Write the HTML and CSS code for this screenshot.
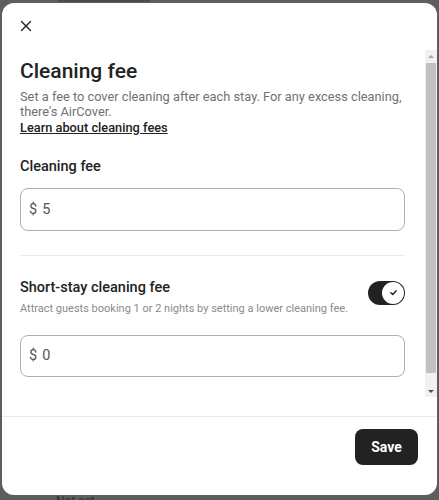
FILE: index.html
```html
<!DOCTYPE html>
<html lang="en">
<head>
<meta charset="utf-8">
<title>Cleaning fee</title>
<link rel="stylesheet" href="styles.css">
</head>
<body>
<div class="backdrop" aria-hidden="true">
  <div class="behind-bar"></div>
  <div class="behind behind-bottom">Not set</div>
</div>
<div class="stage">
  <div class="modal" role="dialog" aria-labelledby="title">
    <div class="modal-header">
      <button class="close" aria-label="Close">
        <svg viewBox="0 0 12 12" width="12" height="12"><path d="M1.5 1.5 L10.5 10.5 M10.5 1.5 L1.5 10.5" stroke="#222" stroke-width="1.4" fill="none" stroke-linecap="round"/></svg>
      </button>
    </div>
    <div class="modal-middle">
      <div class="modal-body">
        <h1 class="title" id="title">Cleaning fee</h1>
        <p class="desc">Set a fee to cover cleaning after each stay. For any excess cleaning, there's AirCover.<br><a class="link" href="#">Learn about cleaning fees</a></p>

        <div class="field-label">Cleaning fee</div>
        <div class="input"><span class="cur">$</span><span class="val">5</span></div>

        <div class="divider"></div>

        <div class="row">
          <div class="row-text">
            <div class="field-label">Short-stay cleaning fee</div>
            <div class="sub">Attract guests booking 1 or 2 nights by setting a lower cleaning fee.</div>
          </div>
          <div class="toggle" role="switch" aria-checked="true">
            <div class="knob">
              <svg viewBox="0 0 10 10" width="9" height="9"><path d="M2 5.2 L4.2 7.2 L8 3" stroke="#222" stroke-width="1.6" fill="none" stroke-linecap="round" stroke-linejoin="round"/></svg>
            </div>
          </div>
        </div>
        <div class="input input2"><span class="cur">$</span><span class="val">0</span></div>
      </div>
      <div class="scrollbar" aria-hidden="true">
        <div class="sb-btn sb-up"><span class="tri tri-up"></span></div>
        <div class="sb-track"><div class="sb-thumb"></div></div>
        <div class="sb-btn sb-down"><span class="tri tri-down"></span></div>
      </div>
    </div>
    <div class="spacer"></div>
    <div class="modal-footer">
      <button class="save">Save</button>
    </div>
  </div>
</div>
</body>
</html>
```

FILE: styles.css
```css
* { box-sizing: border-box; }
html, body { margin: 0; padding: 0; }
body {
  width: 439px;
  height: 500px;
  overflow: hidden;
  background: #5e5e5e;
  font-family: Roboto, "Liberation Sans", Arial, sans-serif;
  color: #222222;
  position: relative;
}
.backdrop {
  position: absolute;
  inset: 0;
}
.behind-bar {
  position: absolute;
  left: 58px;
  top: 0;
  width: 92px;
  height: 2px;
  background: #4a4a4a;
}
.behind {
  position: absolute;
  left: 56px;
  font-size: 12px;
  line-height: 14px;
  color: #333333;
}
.behind-bottom { top: 494px; }
.stage {
  position: relative;
  padding: 3px 2px 5px 2px;
  height: 500px;
}
.modal {
  background: #ffffff;
  border-radius: 12px;
  height: 492px;
  display: flex;
  flex-direction: column;
  overflow: hidden;
}
.modal-header {
  height: 47px;
  flex: none;
  padding: 16px 0 0 17px;
}
.close {
  width: 14px;
  height: 14px;
  padding: 1px;
  border: 0;
  background: transparent;
  display: flex;
  align-items: center;
  justify-content: center;
}
.modal-middle {
  height: 347px;
  flex: none;
  display: flex;
}
.modal-body {
  flex: 1;
  overflow: hidden;
  padding: 8px 20px 0 18px;
}
.scrollbar {
  width: 12px;
  flex: none;
  display: flex;
  flex-direction: column;
  background: #f1f1f1;
}
.sb-btn {
  height: 12px;
  flex: none;
  display: flex;
  align-items: center;
  justify-content: center;
}
.sb-track {
  flex: 1;
  padding: 1px 1px 0 1px;
}
.sb-thumb {
  height: 310px;
  background: #c1c1c1;
}
.tri {
  width: 0;
  height: 0;
  border-left: 3px solid transparent;
  border-right: 3px solid transparent;
}
.tri-up { border-bottom: 3px solid #a3a3a3; }
.tri-down { border-top: 3px solid #505050; }
.title {
  margin: 0 0 5px 0;
  font-size: 21px;
  line-height: 26px;
  font-weight: 500;
  color: #222222;
}
.desc {
  margin: 0;
  font-size: 12.8px;
  line-height: 15.3px;
  color: #717171;
}
.link {
  color: #222222;
  font-weight: 500;
  text-decoration: underline;
}
.field-label {
  font-size: 14.5px;
  line-height: 20px;
  font-weight: 500;
  color: #222222;
}
.desc + .field-label { margin-top: 22px; }
.input {
  margin-top: 11px;
  height: 43px;
  border: 1px solid #b0b0b0;
  border-radius: 8px;
  display: flex;
  align-items: center;
  padding-left: 8px;
  font-size: 14.5px;
  color: #555555;
  gap: 5px;
}
.divider {
  margin-top: 24px;
  height: 1px;
  background: #ebebeb;
}
.row {
  margin-top: 22px;
  display: flex;
  align-items: flex-start;
  justify-content: space-between;
}
.sub {
  margin-top: 3px;
  font-size: 11px;
  line-height: 16px;
  color: #8a8a8a;
}
.toggle {
  flex: none;
  width: 37px;
  height: 24px;
  margin-top: 3px;
  border-radius: 12px;
  background: #222222;
  padding: 1px;
  display: flex;
  justify-content: flex-end;
}
.knob {
  width: 22px;
  height: 22px;
  border-radius: 50%;
  background: #ffffff;
  display: flex;
  align-items: center;
  justify-content: center;
}
.input2 { margin-top: 18px; height: 42px; }
.spacer { height: 19px; flex: none; }
.modal-footer {
  flex: none;
  border-top: 1px solid #ebebeb;
  padding: 12px 19px 0 0;
  display: flex;
  justify-content: flex-end;
}
.save {
  width: 63px;
  height: 36px;
  border: 0;
  border-radius: 8px;
  background: #222222;
  color: #ffffff;
  font-family: inherit;
  font-size: 14px;
  font-weight: 700;
}
```
